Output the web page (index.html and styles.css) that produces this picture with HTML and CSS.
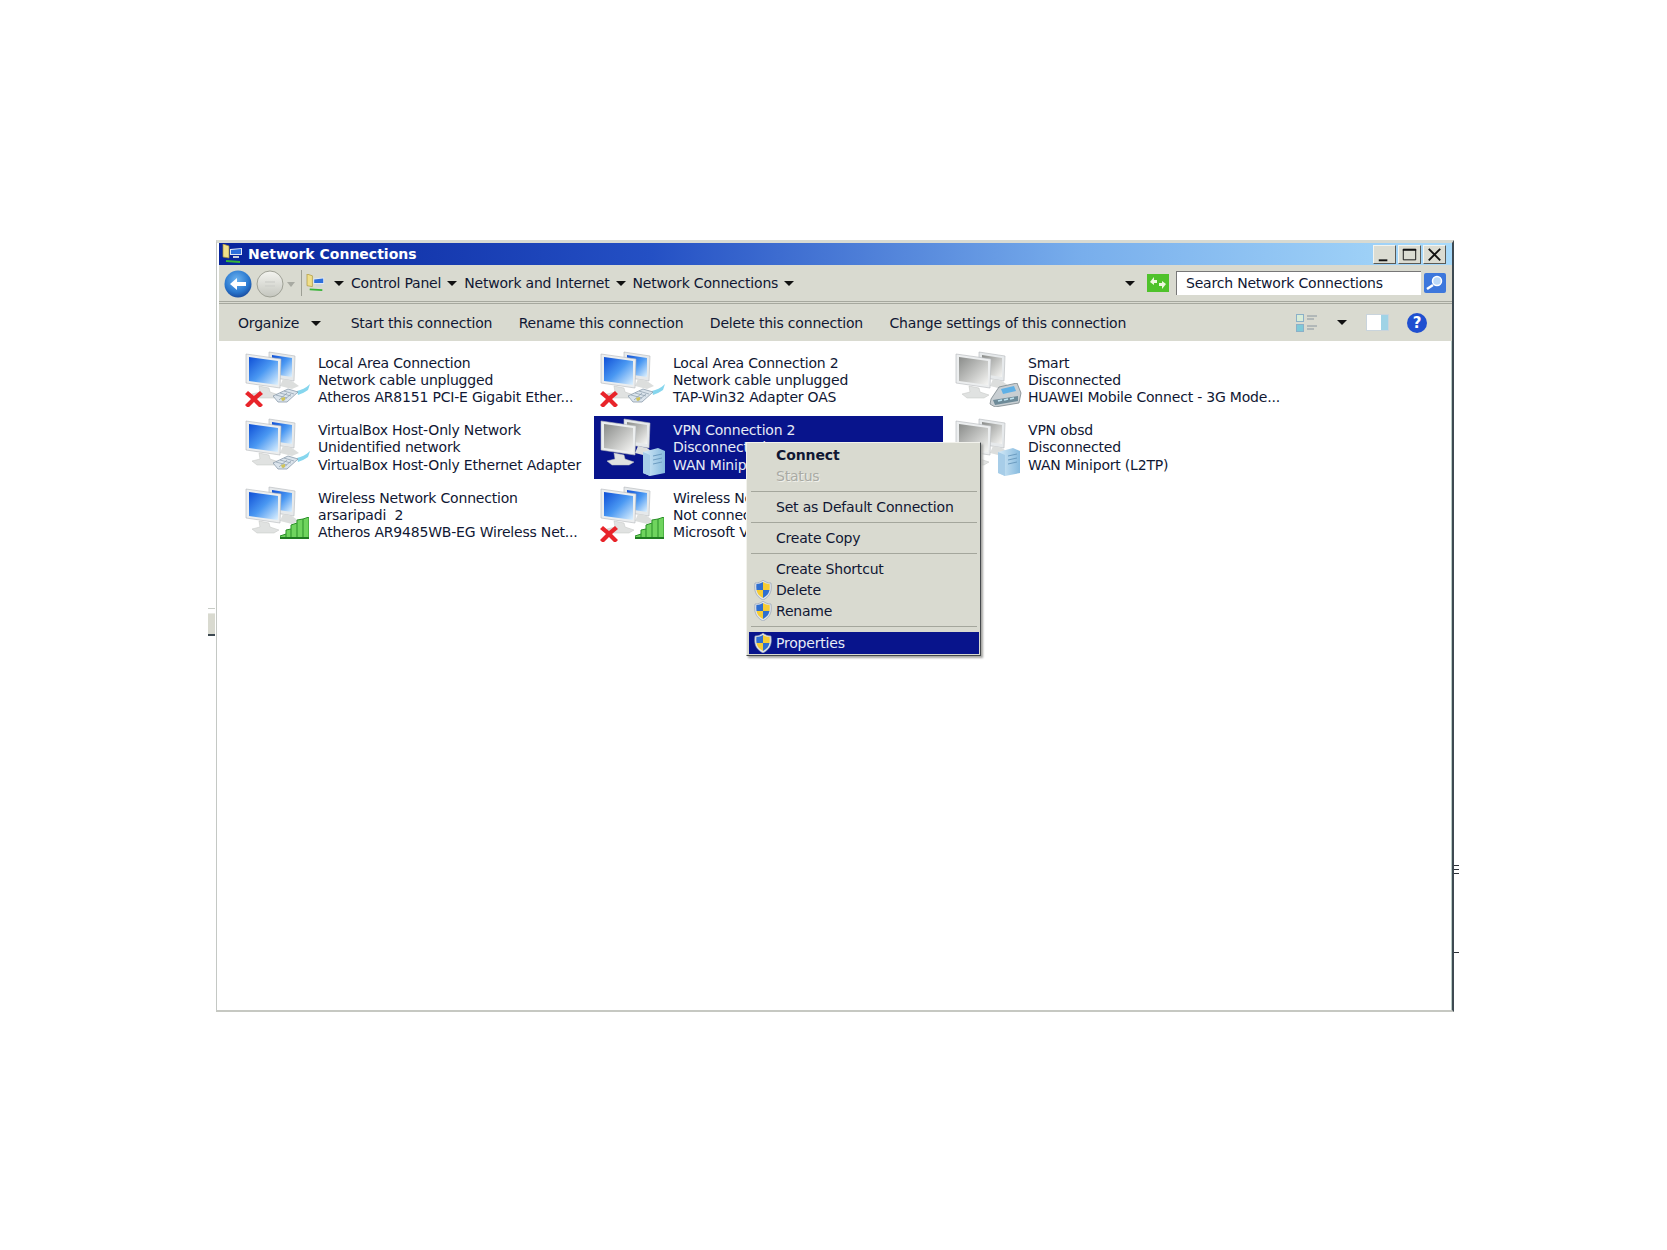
FILE: index.html
```html
<!DOCTYPE html>
<html>

<head>
    <meta charset="utf-8" />
    <title>Network Connections</title>
    <link rel="stylesheet" href="styles.css">
</head>

<body>
    <!-- shared icons -->
    <svg class="defs" width="0" height="0">
        <defs>
            <linearGradient id="gScreen" x1="0" y1="0" x2="1" y2="1">
                <stop offset="0" stop-color="#0f4fd6" />
                <stop offset=".5" stop-color="#4a98f2" />
                <stop offset="1" stop-color="#e0f2fe" />
            </linearGradient>
            <linearGradient id="gGrey" x1="0" y1="0" x2="1" y2="1">
                <stop offset="0" stop-color="#8a8c8a" />
                <stop offset=".55" stop-color="#c4c5c3" />
                <stop offset="1" stop-color="#f6f6f4" />
            </linearGradient>
            <linearGradient id="gServer" x1="0" y1="0" x2="1" y2="0">
                <stop offset="0" stop-color="#d6ebf8" />
                <stop offset="1" stop-color="#86bade" />
            </linearGradient>
            <radialGradient id="gBack" cx=".45" cy=".35" r=".75">
                <stop offset="0" stop-color="#6db4f0" />
                <stop offset=".6" stop-color="#2a78cf" />
                <stop offset="1" stop-color="#123a8c" />
            </radialGradient>
            <linearGradient id="gFwd" x1="0" y1="0" x2="0" y2="1">
                <stop offset="0" stop-color="#f4f4f0" />
                <stop offset="1" stop-color="#c4c6be" />
            </linearGradient>
        </defs>
        <symbol id="pc" viewBox="0 0 66 60">
            <path d="M24 3l26 4-1 25-25-4z" fill="#e6e9eb" stroke="#b3b7ba" stroke-width=".6" />
            <path d="M27 6l20 3v19l-20-3z" fill="var(--screen)" />
            <path d="M38 30l9 2 7 5-7 3-12-3z" fill="#dcdedd" />
            <path d="M1 5l35 5-1 29L1 34z" fill="#eceeef" stroke="#b3b7ba" stroke-width=".6" />
            <path d="M4 8l29 4v24L4 32z" fill="var(--screen)" />
            <path d="M14 37l10 2 1 4 9 3-5 3H12l-5-4 8-2z" fill="#e0e2e1" stroke="#c2c4c3" stroke-width=".5" />
        </symbol>
        <symbol id="x" viewBox="0 0 18 16">
            <path d="M3 0l6 5 6-5 3 3-6 5 6 6-3 3-6-6-6 6-3-3 6-6L0 3z" fill="#e8242a" />
        </symbol>
        <symbol id="plug" viewBox="0 0 37 20">
            <path d="M24 7c4-1 9-3 13-7l-2 6c-3 2-7 4-10 5z" fill="#86d6ee" />
            <path d="M0 12l15-7 10 3-11 10-9 0z" fill="#dbe4ec" stroke="#8a9bab" stroke-width=".8" />
            <path d="M3 11l11 3M7 9l11 3M11 7l10 3M6 16l8-7M10 17l8-7" stroke="#8a9bab" stroke-width=".7" />
            <path d="M8 14l4-1v3l-3 1z" fill="#d0c45a" />
        </symbol>
        <symbol id="bars" viewBox="0 0 29 22">
            <path d="M0 22v-3l6-2v-4l5-1V8l6-2V3l6-1 6-2v22z" fill="#6fd45e" stroke="#2a8f28" stroke-width="1" />
            <path d="M6 17v5M11 12v10M17 6v16M23 2v20" stroke="#2a8f28" stroke-width="1" />
            <path d="M0 21h29" stroke="#1f7c20" stroke-width="2" />
        </symbol>
        <symbol id="server" viewBox="0 0 22 28">
            <path d="M0 4l15-4 7 3v22l-15 3-7-3z" fill="url(#gServer)" />
            <path d="M7 7v21L0 25V4z" fill="#a7cde8" />
            <path d="M10 8l9-2M10 12l9-2M10 16l9-2" stroke="#6c9cc0" stroke-width="1" />
        </symbol>
        <symbol id="modem" viewBox="0 0 33 24">
            <path d="M2 16L10 4l18-4 4 10-2 10-24 4-5-3z" fill="#c8ced2" stroke="#6f7a80" stroke-width=".7" />
            <path d="M12 6l13-3 2 5-13 3z" fill="#5fb0e6" />
            <path d="M4 17l25-4v5l-23 4z" fill="#6d8a98" />
            <path d="M9 18l4-1M15 17l4-1M21 16l4-1" stroke="#bfe3f0" stroke-width="1.4" />
        </symbol>
        <symbol id="shield" viewBox="0 0 18 20">
            <path d="M9 0c2 2 5 3 8 3 1 7 0 13-8 17C1 16 0 10 1 3c3 0 6-1 8-3z" fill="#dfe3e8" stroke="#8b9ab0" stroke-width=".6" />
            <path d="M9 2v8H2.500c-.3-2-.3-4-.1-6C5 4 7 3 9 2z" fill="#2f6fd0" />
            <path d="M9 10h6.500C15 13 13 16 9 18z" fill="#2f6fd0" />
            <path d="M9 2c2 1 4 2 6.600 2 .2 2 .2 4-.1 6H9zM9 10v8c-4-2-6-5-6.500-8z" fill="#f6cc34" />
        </symbol>
        <symbol id="net" viewBox="0 0 22 20">
            <path d="M1 0l6 2v12l-6-1z" fill="#f0df8a" stroke="#a88f30" stroke-width=".7" />
            <path d="M8 5l12-1v7H8z" fill="#dfe8f4" />
            <path d="M9 6l10-1v5H9z" fill="#2d6fdc" />
            <path d="M11 13h6" stroke="#cdd3da" stroke-width="2" />
            <path d="M4 17l14 1" stroke="#37b437" stroke-width="2" />
        </symbol>
    </svg>

    <div class="window">
        <div class="title-bar">
            <svg class="title-icon"><use href="#net" /></svg>
            <span class="title-text">Network Connections</span>
            <div class="win-btns">
                <button class="win-btn"><svg viewBox="0 0 22 18"><path d="M5 14h9v2H5z" fill="#111" /></svg></button>
                <button class="win-btn"><svg viewBox="0 0 22 18"><path d="M4.500 3.500h13v11h-13z" fill="none" stroke="#111" /><path d="M4 3h14v2H4z" fill="#111" /></svg></button>
                <button class="win-btn"><svg viewBox="0 0 22 18"><path d="M5 3l12 12M17 3L5 15" stroke="#111" stroke-width="2" /></svg></button>
            </div>
        </div>

        <div class="address-bar">
            <svg class="nav-back" viewBox="0 0 28 28">
                <circle cx="14" cy="14" r="13.500" fill="url(#gBack)" />
                <path d="M6 14l7-6v4h9v4h-9v4z" fill="#fff" />
            </svg>
            <svg class="nav-fwd" viewBox="0 0 28 28">
                <circle cx="14" cy="14" r="13" fill="url(#gFwd)" stroke="#9fa196" />
                <path d="M9 12h10M9 16h10" stroke="#d0d1cb" stroke-width="1.500" />
            </svg>
            <span class="nav-drop"></span>
            <div class="crumbs">
                <svg class="crumb-icon"><use href="#net" /></svg>
                <i class="caret first"></i>
                <span>Control Panel</span><i class="caret"></i>
                <span>Network and Internet</span><i class="caret"></i>
                <span>Network Connections</span><i class="caret"></i>
                <i class="caret end"></i>
                <svg class="refresh" viewBox="0 0 22 18">
                    <rect width="22" height="18" fill="#4fc22b" />
                    <path d="M3 8l4-5v3h3v3H7v2zM19 10l-4 5v-3h-3V9h3V7z" fill="#eef8e0" />
                </svg>
            </div>
            <div class="search-box">Search Network Connections</div>
            <svg class="search-btn" viewBox="0 0 22 20">
                <rect width="22" height="20" rx="2" fill="#3d77dc" />
                <circle cx="13" cy="8" r="4.500" fill="#bcd9f8" stroke="#fff" stroke-width="1.500" />
                <path d="M9 12l-6 4" stroke="#fff" stroke-width="2.500" />
            </svg>
        </div>

        <div class="toolbar">
            <span class="tool organize">Organize<i class="caret"></i></span>
            <span class="tool">Start this connection</span>
            <span class="tool">Rename this connection</span>
            <span class="tool">Delete this connection</span>
            <span class="tool">Change settings of this connection</span>
            <div class="tool-icons">
                <svg class="views" viewBox="0 0 22 18">
                    <rect x=".5" y=".5" width="7" height="7" fill="#d8ecd8" stroke="#8bb0c8" />
                    <rect x=".5" y="10.500" width="7" height="7" fill="#7fc9d8" stroke="#8bb0c8" />
                    <path d="M11 2h10M11 5h7M11 12h10M11 15h7" stroke="#8a96a0" />
                </svg>
                <i class="caret"></i>
                <svg class="pane" viewBox="0 0 23 17">
                    <rect x=".5" y=".5" width="22" height="16" fill="#fff" stroke="#c9d4dc" />
                    <rect x="15" y="1" width="7" height="15" fill="#9fd3e6" />
                </svg>
                <svg class="help" viewBox="0 0 20 20">
                    <circle cx="10" cy="10" r="10" fill="#1f4fd0" />
                    <text x="10" y="15" text-anchor="middle" class="help-q">?</text>
                </svg>
            </div>
        </div>

        <div class="content">
            <div class="items">
                <div class="item">
                    <div class="icon blue"><svg class="pc"><use href="#pc" /></svg><svg class="bad-x"><use href="#x" /></svg><svg class="bad-plug"><use href="#plug" /></svg></div>
                    <div class="lines"><div>Local Area Connection</div><div>Network cable unplugged</div><div>Atheros AR8151 PCI-E Gigabit Ether...</div></div>
                </div>
                <div class="item">
                    <div class="icon blue"><svg class="pc"><use href="#pc" /></svg><svg class="bad-x"><use href="#x" /></svg><svg class="bad-plug"><use href="#plug" /></svg></div>
                    <div class="lines"><div>Local Area Connection 2</div><div>Network cable unplugged</div><div>TAP-Win32 Adapter OAS</div></div>
                </div>
                <div class="item">
                    <div class="icon grey"><svg class="pc"><use href="#pc" /></svg><svg class="bad-modem"><use href="#modem" /></svg></div>
                    <div class="lines"><div>Smart</div><div>Disconnected</div><div>HUAWEI Mobile Connect - 3G Mode...</div></div>
                </div>
                <div class="item">
                    <div class="icon blue"><svg class="pc"><use href="#pc" /></svg><svg class="bad-plug"><use href="#plug" /></svg></div>
                    <div class="lines"><div>VirtualBox Host-Only Network</div><div>Unidentified network</div><div>VirtualBox Host-Only Ethernet Adapter</div></div>
                </div>
                <div class="item selected">
                    <div class="icon grey"><svg class="pc"><use href="#pc" /></svg><svg class="bad-server"><use href="#server" /></svg></div>
                    <div class="lines"><div>VPN Connection 2</div><div>Disconnected</div><div>WAN Miniport (L2TP)</div></div>
                </div>
                <div class="item">
                    <div class="icon grey"><svg class="pc"><use href="#pc" /></svg><svg class="bad-server"><use href="#server" /></svg></div>
                    <div class="lines"><div>VPN obsd</div><div>Disconnected</div><div>WAN Miniport (L2TP)</div></div>
                </div>
                <div class="item">
                    <div class="icon blue"><svg class="pc"><use href="#pc" /></svg><svg class="bad-bars"><use href="#bars" /></svg></div>
                    <div class="lines"><div>Wireless Network Connection</div><div>arsaripadi&nbsp; 2</div><div>Atheros AR9485WB-EG Wireless Net...</div></div>
                </div>
                <div class="item">
                    <div class="icon blue"><svg class="pc"><use href="#pc" /></svg><svg class="bad-x"><use href="#x" /></svg><svg class="bad-bars"><use href="#bars" /></svg></div>
                    <div class="lines"><div>Wireless Network Connection 2</div><div>Not connected</div><div>Microsoft Virtual WiFi Miniport</div></div>
                </div>
            </div>

            <!-- context menu -->
            <div class="menu">
                <div class="menu-item bold"><span class="slot"></span>Connect</div>
                <div class="menu-item off"><span class="slot"></span>Status</div>
                <div class="sep"></div>
                <div class="menu-item"><span class="slot"></span>Set as Default Connection</div>
                <div class="sep"></div>
                <div class="menu-item"><span class="slot"></span>Create Copy</div>
                <div class="sep"></div>
                <div class="menu-item"><span class="slot"></span>Create Shortcut</div>
                <div class="menu-item"><svg class="slot"><use href="#shield" /></svg>Delete</div>
                <div class="menu-item"><svg class="slot"><use href="#shield" /></svg>Rename</div>
                <div class="sep last"></div>
                <div class="menu-item active"><svg class="slot"><use href="#shield" /></svg>Properties</div>
            </div>
        </div>

        <!-- bits of the scan left at the window edge -->
        <div class="scrap-left"></div>
        <div class="scrap-right"></div>
        <div class="scrap-right low"></div>
    </div>
</body>

</html>
```

FILE: styles.css
```css
* {
    box-sizing: border-box;
}

html, body {
    margin: 0;
    height: 1250px;
    background: #fff;
    overflow: hidden;
}

body {
    padding: 240px 0 0 216px;
    font: 14px "DejaVu Sans", "Liberation Sans", sans-serif;
    letter-spacing: -.2px;
    color: #101733;
}

.defs {
    position: absolute;
}

svg {
    display: block;
}

.caret {
    display: inline-block;
    width: 0;
    height: 0;
    border: 5px solid transparent;
    border-top: 5px solid #111;
    border-bottom: 0;
}

.window {
    position: relative;
    display: flex;
    flex-direction: column;
    width: 1238px;
    height: 772px;
    background: #fff;
    border: 1px solid #c4c8c4;
    border-right: 2px solid #3e4a52;
    border-top: 3px solid #d8dad2;
    border-bottom: 2px solid #c6c8c2;
    padding: 0 0 0 2px;
    box-shadow: inset -1px 0 0 #b8ccc6;
}

/* title bar */
.title-bar {
    display: flex;
    align-items: center;
    flex: none;
    height: 22px;
    padding-left: 3px;
    background: linear-gradient(90deg, #08249c 0, #2450c4 35%, #78aeec 70%, #a8dafa 100%);
    color: #fff;
}

.title-icon {
    width: 22px;
    height: 20px;
    margin-right: 4px;
}

.title-text {
    font-weight: bold;
    letter-spacing: 0;
}

.win-btns {
    display: flex;
    gap: 2px;
    margin-left: auto;
    margin-right: 6px;
}

.win-btn {
    width: 23px;
    height: 19px;
    padding: 0;
    background: #dbdcd2;
    border: 1px solid;
    border-color: #f4f4ee #5a5a55 #5a5a55 #f4f4ee;
}

/* address bar */
.address-bar {
    display: flex;
    align-items: center;
    flex: none;
    height: 39px;
    padding: 0 6px 0 5px;
    background: #d9dad0;
    border-bottom: 3px double #a6a89e;
}

.nav-back {
    width: 28px;
    height: 28px;
    margin-top: 2px;
}

.nav-fwd {
    width: 28px;
    height: 28px;
    margin: 2px 0 0 4px;
}

.nav-drop {
    width: 0;
    height: 0;
    margin: 2px 6px 0 3px;
    border: 4px solid transparent;
    border-top: 5px solid #a8aaa2;
    border-bottom: 0;
}

.crumbs {
    display: flex;
    align-items: center;
    flex: 1;
    height: 26px;
    padding-left: 4px;
    border-left: 1px solid #9d9f95;
}

.crumb-icon {
    width: 20px;
    height: 18px;
    margin-right: 8px;
}

.crumbs span {
    margin-right: 6px;
}

.crumbs .caret {
    margin-right: 7px;
}

.crumbs .caret.first {
    margin-right: 7px;
}

.crumbs .caret.end {
    margin-left: auto;
    margin-right: 12px;
}

.refresh {
    width: 22px;
    height: 18px;
    margin-right: 7px;
}

.search-box {
    width: 245px;
    height: 24px;
    padding: 3px 0 0 9px;
    line-height: 17px;
    background: #fff;
    border: 1px solid #777;
    border-right: 0;
    border-bottom: 0;
}

.search-btn {
    width: 22px;
    height: 20px;
    margin-left: 3px;
}

/* toolbar */
.toolbar {
    display: flex;
    align-items: center;
    flex: none;
    height: 37px;
    padding: 0 25px 0 19px;
    background: #d9dad0;
    gap: 26.500px;
}

.organize .caret {
    margin: 0 3px 0 12px;
    vertical-align: 2px;
}

.tool-icons {
    display: flex;
    align-items: center;
    margin-left: auto;
}

.views {
    width: 22px;
    height: 18px;
    margin-right: 19px;
}

.pane {
    width: 23px;
    height: 17px;
    margin: 0 18px 0 19px;
}

.help {
    width: 20px;
    height: 20px;
}

.help-q {
    font: bold 15px "DejaVu Sans", sans-serif;
    fill: #fff;
}

/* connection list */
.content {
    position: relative;
    flex: 1;
    padding: 7px 0 0 20px;
}

.items {
    display: grid;
    grid-template-columns: repeat(3, 349px);
    grid-auto-rows: 63px;
    column-gap: 6px;
    row-gap: 4.500px;
}

.item {
    display: flex;
    align-items: center;
    padding-left: 6px;
    line-height: 17.200px;
    white-space: nowrap;
    overflow: hidden;
}

.lines {
    padding-top: 2px;
}

.item.selected {
    background: #08148c;
    color: #e6ebf6;
}

.icon {
    position: relative;
    flex: none;
    width: 66px;
    height: 60px;
    margin: 0 7px 2px 0;
}

.icon.blue {
    --screen: url(#gScreen);
}

.icon.grey {
    --screen: url(#gGrey);
}

.pc {
    width: 66px;
    height: 60px;
}

.bad-x {
    position: absolute;
    left: 0;
    top: 42px;
    width: 18px;
    height: 16px;
}

.bad-plug {
    position: absolute;
    left: 28px;
    top: 35px;
    width: 37px;
    height: 20px;
}

.bad-bars {
    position: absolute;
    left: 35px;
    top: 33px;
    width: 29px;
    height: 22px;
}

.bad-server {
    position: absolute;
    left: 43px;
    top: 32px;
    width: 22px;
    height: 28px;
}

.bad-modem {
    position: absolute;
    left: 34px;
    top: 34px;
    width: 33px;
    height: 24px;
}

/* right-click menu */
.menu {
    position: absolute;
    left: 527px;
    top: 101px;
    width: 235px;
    height: 214px;
    padding: 1px 1px 0 2px;
    background: #d9dad0;
    border: 1px solid;
    border-color: #f2f2ec #45494c #45494c #f2f2ec;
    box-shadow: 2px 2px 2px #a6a6a2;
}

.menu-item {
    display: flex;
    align-items: center;
    height: 21px;
    padding-left: 5px;
}

.menu-item .slot {
    flex: none;
    width: 18px;
    height: 20px;
    margin-right: 4px;
}

.menu-item.bold {
    font-weight: bold;
    letter-spacing: -.1px;
}

.menu-item.off {
    color: #a9aaa4;
    text-shadow: 1px 1px 0 #f0f0ea;
}

.menu-item.active {
    height: 22px;
    background: #08148c;
    color: #e6ebf6;
}

.sep {
    height: 10px;
    margin: 0 2px;
    background: linear-gradient(#a4a69c, #a4a69c) 0 5px / 100% 1px no-repeat;
}

.sep.last {
    height: 11px;
}

/* scan leftovers */
.scrap-left {
    position: absolute;
    left: -9px;
    top: 365px;
    width: 7px;
    height: 28px;
    background: linear-gradient(#fff 15%, #d9dad0 20%);
    border-top: 1px solid #c8ccc6;
    border-bottom: 2px solid #3e4a52;
}

.scrap-right {
    position: absolute;
    right: -7px;
    top: 622px;
    width: 5px;
    height: 9px;
    border-top: 1px solid #2a3036;
    border-bottom: 1px solid #2a3036;
    background: linear-gradient(#2a3036, #2a3036) 0 3px / 100% 1px no-repeat;
}

.scrap-right.low {
    top: 709px;
    height: 1px;
    border-bottom: 0;
    background: none;
}
```
